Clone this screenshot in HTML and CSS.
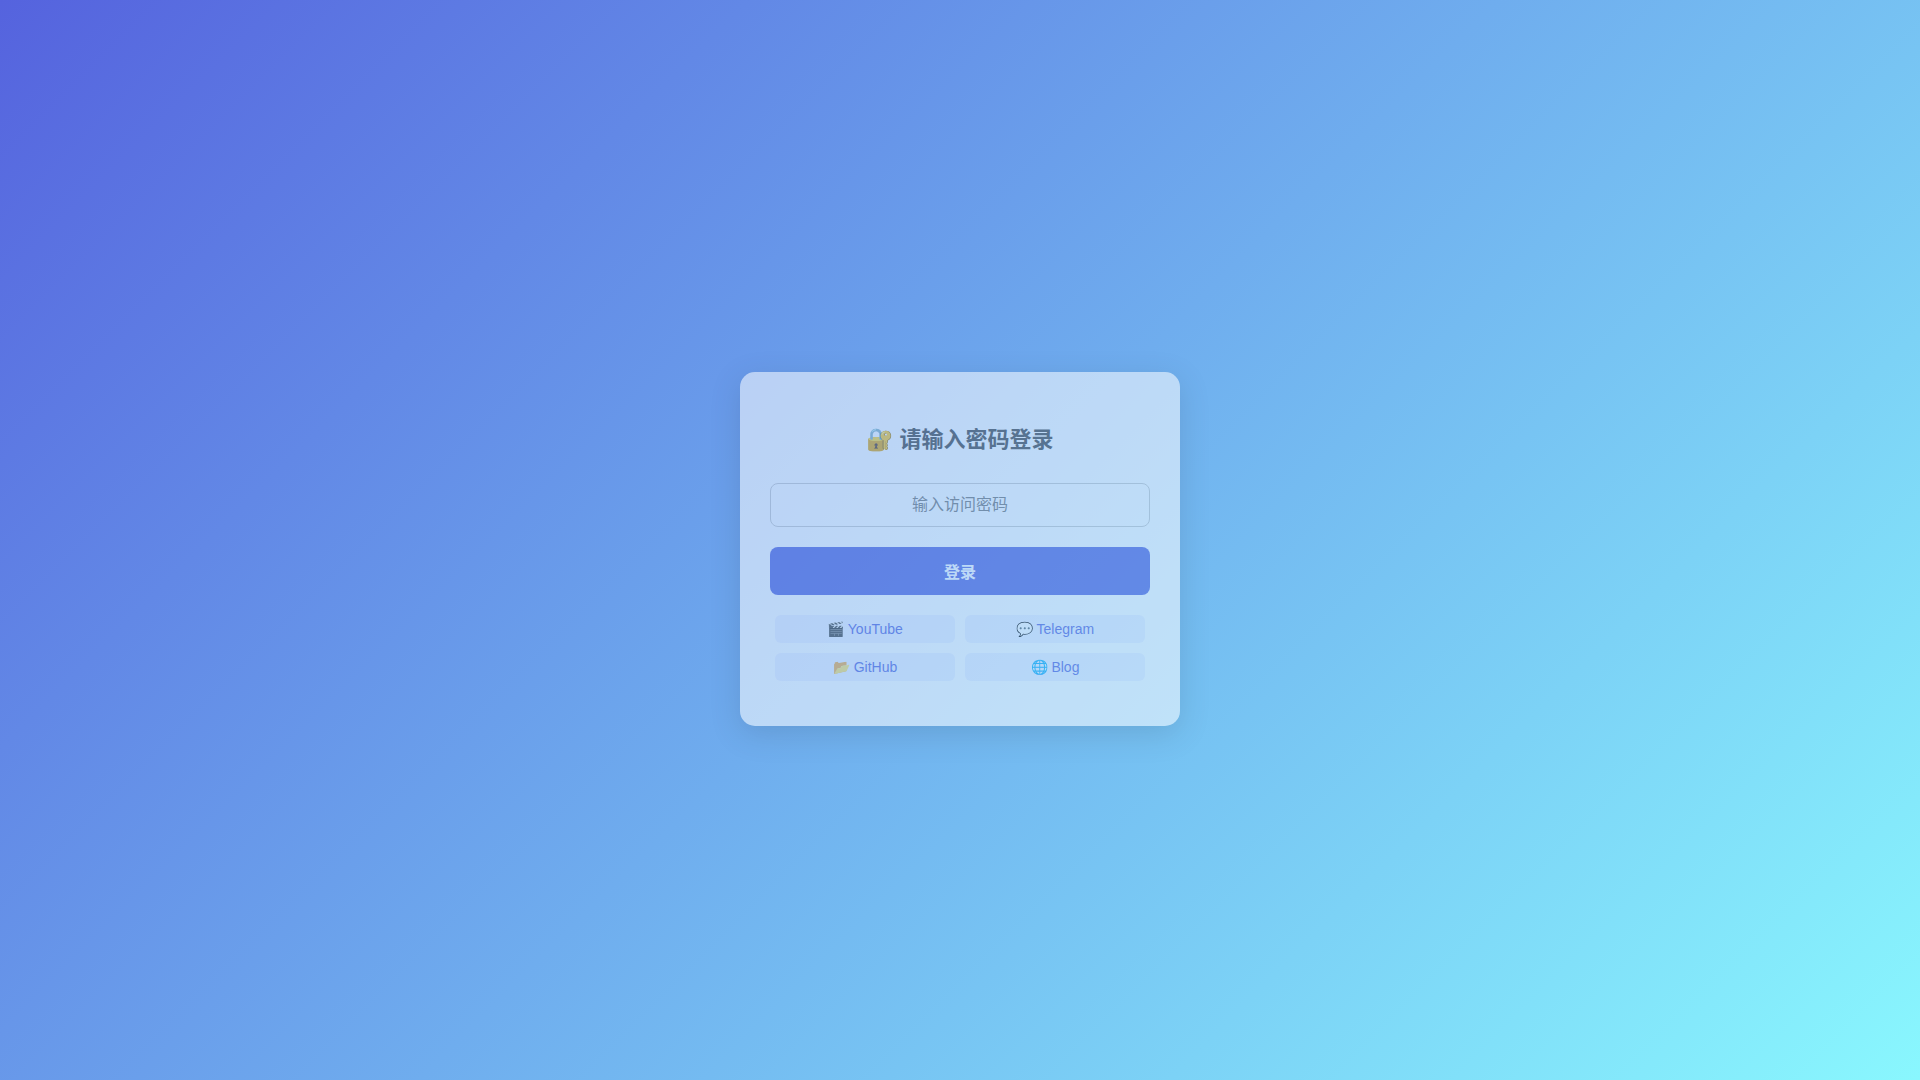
FILE: index.html
```html
<!DOCTYPE html>
<html lang="zh-CN">
<head>
<meta charset="UTF-8">
<meta name="viewport" content="width=device-width, initial-scale=1">
<title>请输入密码登录</title>
<link rel="stylesheet" href="styles.css">
</head>
<body>
<main class="card">
  <h1 class="title">🔐 请输入密码登录</h1>
  <form class="form">
    <input class="password" type="password" placeholder="输入访问密码" aria-label="输入访问密码">
    <button class="submit" type="submit">登录</button>
  </form>
  <nav class="links">
    <a class="link" href="#youtube">🎬 YouTube</a>
    <a class="link" href="#telegram">💬 Telegram</a>
    <a class="link" href="#github">📂 GitHub</a>
    <a class="link" href="#blog">🌐 Blog</a>
  </nav>
</main>
</body>
</html>
```
FILE: styles.css
```css
* {
  box-sizing: border-box;
}

body {
  margin: 0;
  min-height: 100vh;
  display: flex;
  align-items: center;
  justify-content: center;
  padding: 36px 18px 18px;
  background: linear-gradient(135deg, #5563de, #89f7fe);
  font-family: "Liberation Sans", "Noto Sans CJK SC", sans-serif;
}

.card {
  width: 100%;
  max-width: 440px;
  padding: 50px 30px 45px;
  border-radius: 15px;
  background: #fff;
  box-shadow: 0 8px 30px rgba(0, 0, 0, 0.2);
  opacity: 0.54;
  text-align: center;
}

.title {
  margin: 0 0 26px;
  color: #444;
  font-size: 22px;
  line-height: 35px;
}

.form {
  display: flex;
  flex-direction: column;
  gap: 20px;
  margin-bottom: 20px;
}

.password {
  width: 100%;
  height: 44px;
  padding: 0 12px;
  border: 1px solid #ccc;
  border-radius: 8px;
  background: transparent;
  font: inherit;
  text-align: center;
}

.password::placeholder {
  color: #757575;
}

.submit {
  width: 100%;
  height: 48px;
  border: 0;
  border-radius: 8px;
  background: #5563de;
  color: #fff;
  font: inherit;
  font-weight: bold;
  cursor: pointer;
}

.links {
  display: grid;
  grid-template-columns: 1fr 1fr;
  gap: 10px;
  padding: 0 5px;
}

.link {
  padding: 6px;
  border-radius: 6px;
  background: #f0f2ff;
  color: #5563de;
  font-size: 14px;
  line-height: 16px;
  text-decoration: none;
}
```
